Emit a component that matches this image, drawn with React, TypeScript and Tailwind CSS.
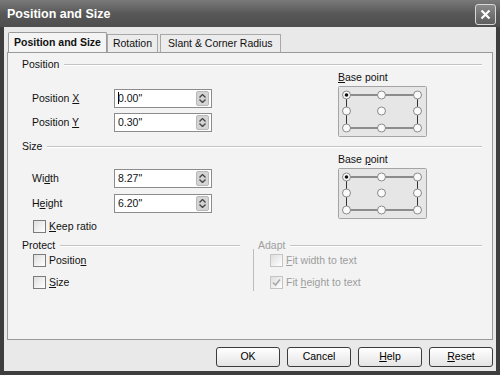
// Position and Size dialog - XP style, greyscale

function Spin() {
  return (
    <div className="w-[13px] h-[15px] bg-[#d4d4d4] border border-[#b8b8b8] rounded-[2px] flex flex-col items-center justify-center gap-[1px]">
      <svg width="7" height="4" viewBox="0 0 7 4"><path d="M0.5 3.5 L3.5 0.5 L6.5 3.5" stroke="#444" strokeWidth="1.3" fill="none" /></svg>
      <svg width="7" height="4" viewBox="0 0 7 4"><path d="M0.5 0.5 L3.5 3.5 L6.5 0.5" stroke="#444" strokeWidth="1.3" fill="none" /></svg>
    </div>
  );
}

function Field({ label, u, value, caret }: { label: string; u: number; value: string; caret?: boolean }) {
  return (
    <div className="flex items-center h-[19px]">
      <span className="w-[92px] pl-[10px]">
        {label.slice(0, u)}
        <span className="underline">{label[u]}</span>
        {label.slice(u + 1)}
      </span>
      <div className="w-[98px] h-[19px] bg-white border border-[#8c8c8c] flex items-center justify-between pl-[3px] pr-[2px]">
        <span className="relative">
          {caret && <span className="absolute left-0 top-[1px] w-[1px] h-[12px] bg-black" />}
          {value}
        </span>
        <Spin />
      </div>
    </div>
  );
}

function Check({ label, u, checked, disabled }: { label: string; u: number; checked?: boolean; disabled?: boolean }) {
  return (
    <div className={`flex items-center gap-[3px] h-[13px] ${disabled ? "text-[#9d9d9d]" : ""}`}>
      <div className={`w-[13px] h-[13px] border ${disabled ? "border-[#c4c4c4]" : "border-[#7b7b7b]"} bg-gradient-to-br from-[#dedede] to-white flex items-center justify-center`}>
        {checked && (
          <svg width="9" height="9" viewBox="0 0 9 9"><path d="M1 4.5 L3.5 7 L8 1.5" stroke="#a8a8a8" strokeWidth="1.6" fill="none" /></svg>
        )}
      </div>
      <span>
        {label.slice(0, u)}
        <span className="underline">{label[u]}</span>
        {label.slice(u + 1)}
      </span>
    </div>
  );
}

function BasePoint({ u }: { u?: boolean }) {
  const xs = [8.5, 43.5, 79.5];
  const ys = [9, 25, 42];
  return (
    <div className="flex flex-col">
      <span className="h-[15px] leading-[12px]">
        {u ? <span className="underline">B</span> : "B"}ase {u ? "point" : <><span className="underline">p</span>oint</>}
      </span>
      <svg width="89" height="51" viewBox="0 0 89 51">
        <rect x="0.5" y="0.5" width="88" height="50" rx="1" fill="#e6e6e6" stroke="#a4a4a4" />
        <path d="M8.5 9 H79.5 M8.5 42 H79.5 M8.5 9 V42 M79.5 9 V42" stroke="#333" strokeWidth="1" />
        {ys.map((y) =>
          xs.map((x) => (
            <g key={`${x}-${y}`}>
              <circle cx={x} cy={y} r="4" fill="#fafafa" stroke="#8a8a8a" />
              {x === 8.5 && y === 9 && <circle cx={x} cy={y} r="1.8" fill="#111" />}
            </g>
          ))
        )}
      </svg>
    </div>
  );
}

function Header({ text, disabled }: { text: string; disabled?: boolean }) {
  return (
    <div className={`flex items-center gap-[5px] h-[13px] ${disabled ? "text-[#a0a0a0]" : ""}`}>
      <span>{text}</span>
      <div className="flex-1 h-[2px] bg-[#c4c4c4] border-b border-white" />
    </div>
  );
}

function Btn({ children }: { children: React.ReactNode }) {
  return (
    <button className="w-[64px] h-[20px] rounded-[3px] border border-[#3c3c3c] bg-gradient-to-b from-white to-[#e4e4e4] text-[10.5px] text-black flex items-center justify-center">
      {children}
    </button>
  );
}

export default function App() {
  return (
    <div className="w-[500px] h-[375px] bg-[#3e3e3e] flex flex-col text-[10.5px] text-[#111]" style={{ fontFamily: '"Liberation Sans", Arial, sans-serif' }}>

      {/* Title bar */}
      <div className="h-[27px] bg-gradient-to-b from-[#7a7a7a] via-[#585858] to-[#4e4e4e] flex items-center justify-between pl-[7px] pr-[4px] pt-[1px]">
        <span className="text-white font-bold text-[12.5px]">Position and Size</span>
        <div className="w-[21px] h-[21px] rounded-[3px] border border-[#d8d8d8] bg-gradient-to-b from-[#8a8a8a] to-[#5e5e5e] flex items-center justify-center">
          <svg width="11" height="11" viewBox="0 0 11 11"><path d="M1.5 1.5 L9.5 9.5 M9.5 1.5 L1.5 9.5" stroke="white" strokeWidth="2.2" /></svg>
        </div>
      </div>

      {/* Body */}
      <div className="flex-1 mx-[4px] mb-[4px] bg-[#e9e9e9] flex flex-col pt-[6px] px-[3px]">

        {/* Tabs */}
        <div className="flex items-end h-[19px] pl-[1px]">
          <div className="h-[20px] px-[5px] bg-[#f4f4f4] border border-[#9a9a9a] border-b-0 rounded-t-[2px] font-bold flex items-center relative z-10">Position and Size</div>
          <div className="h-[18px] px-[5px] bg-[#ececec] border border-[#a8a8a8] border-b-0 flex items-center">Rotation</div>
          <div className="h-[18px] px-[7px] ml-[2px] bg-[#ececec] border border-[#a8a8a8] border-b-0 flex items-center">Slant &amp; Corner Radius</div>
        </div>

        {/* Panel */}
        <div className="h-[288px] bg-[#f3f3f3] border border-[#9a9a9a] pl-[14px] pr-[10px] pt-[5px]">

          {/* Position */}
          <Header text="Position" />
          <div className="flex h-[69px]">
            <div className="w-[316px] flex flex-col gap-[5px] pt-[18px]">
              <Field label="Position X" u={9} value="0.00&quot;" caret />
              <Field label="Position Y" u={9} value="0.30&quot;" />
            </div>
            <BasePoint u />
          </div>

          {/* Size */}
          <Header text="Size" />
          <div className="flex h-[86px]">
            <div className="w-[316px] flex flex-col pt-[16px]">
              <Field label="Width" u={2} value="8.27&quot;" />
              <div className="h-[6px]" />
              <Field label="Height" u={1} value="6.20&quot;" />
              <div className="h-[7px]" />
              <div className="pl-[11px]"><Check label="Keep ratio" u={0} /></div>
            </div>
            <BasePoint />
          </div>

          {/* Protect / Adapt */}
          <div className="flex">
            <div className="w-[218px] flex flex-col">
              <Header text="Protect" />
              <div className="pl-[11px] pt-[2px] flex flex-col gap-[9px]">
                <Check label="Position" u={7} />
                <Check label="Size" u={0} />
              </div>
            </div>
            <div className="flex-1 flex ml-[13px]">
              <div className="w-[1px] mt-[10px] h-[42px] bg-[#bdbdbd]" />
              <div className="flex-1 flex flex-col ml-[4px]">
                <Header text="Adapt" disabled />
                <div className="pl-[12px] pt-[2px] flex flex-col gap-[9px]">
                  <Check label="Fit width to text" u={0} disabled />
                  <Check label="Fit height to text" u={4} checked disabled />
                </div>
              </div>
            </div>
          </div>
        </div>

        {/* Buttons */}
        <div className="flex justify-end gap-[7px] pt-[7px]">
          <Btn>OK</Btn>
          <Btn>Cancel</Btn>
          <Btn><span className="underline">H</span>elp</Btn>
          <Btn><span className="underline">R</span>eset</Btn>
        </div>
      </div>
    </div>
  );
}
